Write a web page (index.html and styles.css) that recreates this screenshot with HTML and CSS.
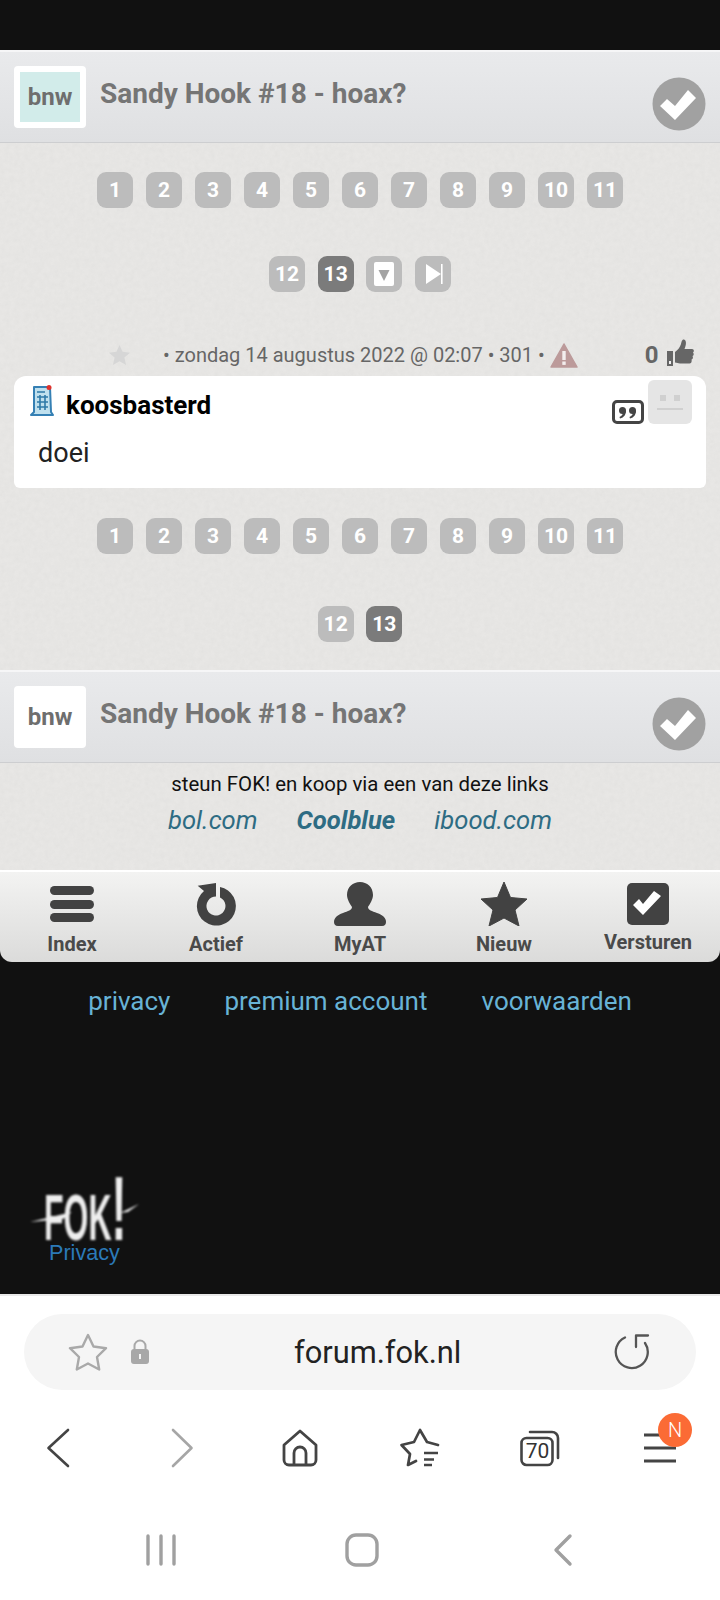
FILE: index.html
```html
<!DOCTYPE html>
<html lang="nl">
<head>
<meta charset="utf-8">
<title>Sandy Hook #18 - hoax?</title>
<link rel="stylesheet" href="styles.css">
</head>
<body>
<div class="page">
  <div class="status"></div>

  <header class="thread-head">
    <div class="forum-tag forum-tag-framed"><span>bnw</span></div>
    <h1 class="thread-title">Sandy Hook #18 - hoax?</h1>
    <svg class="check-badge" viewBox="0 0 54 54"><circle cx="27" cy="27" r="26.5" fill="#a1a1a1"/><path d="M8 29l7-7 8 7 13-16 8 8-21 22z" fill="#fff"/></svg>
  </header>

  <section class="textured">
    <nav class="pager">
      <div class="pg-row">
        <a class="pg">1</a><a class="pg">2</a><a class="pg">3</a><a class="pg">4</a><a class="pg">5</a><a class="pg">6</a><a class="pg">7</a><a class="pg">8</a><a class="pg">9</a><a class="pg">10</a><a class="pg">11</a>
      </div>
      <div class="pg-row pg-row-short">
        <a class="pg">12</a><a class="pg pg-on">13</a>
        <a class="pg"><svg class="pg-icon" viewBox="0 0 36 36"><rect x="8" y="6" width="20" height="24" rx="2" fill="#fff"/><path d="M12.5 14h11L18 25z" fill="#a3a3a3"/></svg></a>
        <a class="pg"><svg class="pg-icon" viewBox="0 0 36 36"><path d="M11 8l15 10-15 10z" fill="#fff"/><rect x="26" y="8" width="1.6" height="20" fill="#fff"/></svg></a>
      </div>
    </nav>

    <div class="post-meta">
      <svg class="meta-star" viewBox="0 0 24 24"><path d="M12 1l3.2 7.200 7.800.8-5.900 5.200 1.800 7.800-6.900-4-6.900 4 1.800-7.800L1 9l7.800-.8z" fill="#d6d6d6"/></svg>
      <span class="meta-text">• zondag 14 augustus 2022 @ 02:07 • 301 •</span>
      <svg class="meta-warn" viewBox="0 0 28 25"><path d="M14 1L27 24H1z" fill="#bc9a9a" stroke="#bc9a9a" stroke-width="1.500" stroke-linejoin="round"/><rect x="12.300" y="8" width="3.400" height="9" fill="#f3eeee"/><rect x="12.300" y="18.500" width="3.400" height="3.400" fill="#f3eeee"/></svg>
      <span class="meta-count">0</span>
      <svg class="meta-thumb" viewBox="0 0 27 27"><rect x="0" y="12" width="6" height="15" fill="#666"/><rect x="2" y="22" width="2" height="3" fill="#eee"/><path d="M8 13c3-2 5-5 6-8 .5-2 1-5 3-4.500 3 1 2 6 .5 9.500H25c2 0 2.500 2.500 1 3.500 1 1 1 3-.5 3.500.8 1.200.5 3-1 3.500.5 1.500 0 4-2 4H13c-2 0-3-1-5-1z" fill="#666"/></svg>
    </div>

    <article class="post">
      <div class="post-head">
        <svg class="post-icon" viewBox="0 0 24 31"><path d="M4 2h16l1 25 2 3H1l3-3z" fill="#bfe0ee" stroke="#3580b4" stroke-width="2" stroke-linejoin="round"/><path d="M7 7h8M7 12h11M7 17h11M7 22h11M10 10v15M15 10v15" stroke="#2f7aa8" stroke-width="1.600"/><circle cx="19" cy="2.500" r="2.500" fill="#e0322c"/></svg>
        <span class="username">koosbasterd</span>
        <svg class="quote" viewBox="0 0 32 24"><rect x="1.500" y="1.500" width="29" height="21" rx="3.500" fill="#fff" stroke="#444" stroke-width="3"/><circle cx="10.500" cy="10.500" r="3.500" fill="#444"/><circle cx="20.500" cy="10.500" r="3.500" fill="#444"/><path d="M14 10.500c0 4-2 7-6 8l-.5-1.500c2.500-1 3.500-3 3.500-5zM24 10.500c0 4-2 7-6 8l-.5-1.500c2.500-1 3.500-3 3.500-5z" fill="#444"/></svg>
        <div class="avatar"><i class="eye"></i><i class="eye"></i><i class="mouth"></i></div>
      </div>
      <p class="post-body">doei</p>
    </article>

    <nav class="pager pager-bottom">
      <div class="pg-row">
        <a class="pg">1</a><a class="pg">2</a><a class="pg">3</a><a class="pg">4</a><a class="pg">5</a><a class="pg">6</a><a class="pg">7</a><a class="pg">8</a><a class="pg">9</a><a class="pg">10</a><a class="pg">11</a>
      </div>
      <div class="pg-row pg-row-short">
        <a class="pg">12</a><a class="pg pg-on">13</a>
      </div>
    </nav>
  </section>

  <header class="thread-head">
    <div class="forum-tag"><span>bnw</span></div>
    <h2 class="thread-title">Sandy Hook #18 - hoax?</h2>
    <svg class="check-badge" viewBox="0 0 54 54"><circle cx="27" cy="27" r="26.500" fill="#a1a1a1"/><path d="M8 29l7-7 8 7 13-16 8 8-21 22z" fill="#fff"/></svg>
  </header>

  <section class="textured support">
    <p class="support-text">steun FOK! en koop via een van deze links</p>
    <div class="shops"><a>bol.com</a><a class="shop-strong">Coolblue</a><a>ibood.com</a></div>
  </section>

  <nav class="tabbar">
    <a class="tab">
      <svg class="tab-icon" viewBox="0 0 44 44"><rect y="4" width="44" height="9" rx="4.500" fill="#424242"/><rect y="18" width="44" height="9" rx="4.500" fill="#424242"/><rect y="31" width="44" height="9" rx="4.500" fill="#424242"/></svg>
      <span>Index</span>
    </a>
    <a class="tab">
      <svg class="tab-icon" viewBox="0 0 44 44"><path d="M26 4.900A19.500 19.500 0 1 1 10 9L3.700 3.700 22 1V14.500A9.500 9.500 0 1 0 26 15.400z" fill="#424242"/></svg>
      <span>Actief</span>
    </a>
    <a class="tab">
      <svg class="tab-icon tab-icon-wide" viewBox="0 0 52 44"><path d="M26 0c7 0 13 5 13 13 0 4-3 9-5 12 0 3 4 4 9 6 6 2 9 5 9 9 0 2-1 4-4 4H4c-3 0-4-2-4-4 0-4 3-7 9-9 5-2 9-3 9-6-2-3-5-8-5-12C13 5 19 0 26 0z" fill="#424242"/></svg>
      <span>MyAT</span>
    </a>
    <a class="tab">
      <svg class="tab-icon tab-icon-wide" viewBox="0 0 48 44"><path d="M24 0l6.500 15.500L47 17 35 28l4 16-15-8-15 8 4-16L1 17l16.500-1.500z" fill="#424242" stroke="#424242" stroke-linejoin="round"/></svg>
      <span>Nieuw</span>
    </a>
    <a class="tab tab-raised">
      <svg class="tab-icon" viewBox="0 0 44 44"><rect x="1" y="1" width="42" height="42" rx="5" fill="#424242"/><path d="M7 23l6-6 4 5 11-13 7 5-18 19z" fill="#fff"/></svg>
      <span>Versturen</span>
    </a>
  </nav>

  <footer class="site-foot">
    <div class="foot-links"><a>privacy</a><a>premium account</a><a>voorwaarden</a></div>
    <div class="fok-logo">
      <svg class="fok-art" viewBox="0 0 112 70">
        <defs><filter id="soft" x="-10%" y="-10%" width="120%" height="120%"><feGaussianBlur stdDeviation="0.800"/></filter></defs>
        <g filter="url(#soft)" fill="#eee">
          <text class="fok-word" transform="translate(14 65) scale(.5 1)">FOK<tspan class="fok-bang">!</tspan></text>
          <path d="M0 47L42 37 33 44zM90 38L109 29 98 37z"/>
        </g>
      </svg>
      <span class="fok-caption">Privacy</span>
    </div>
  </footer>

  <section class="browser">
    <div class="urlbar">
      <svg class="url-star" viewBox="0 0 40 38"><path d="M20 2l5.500 11.500 12.500 1.700-9 8.800 2.200 12.500L20 30.500 8.800 36.500 11 24 2 15.200l12.500-1.700z" fill="none" stroke="#a9a9a9" stroke-width="2.400" stroke-linejoin="round"/></svg>
      <svg class="url-lock" viewBox="0 0 20 26"><path d="M4.500 11V7a5.500 5.500 0 0 1 11 0v4" fill="none" stroke="#a8a8a8" stroke-width="2"/><rect x="1" y="10" width="18" height="15" rx="3" fill="#a8a8a8"/><rect x="9" y="15" width="2" height="5" fill="#f5f5f5"/></svg>
      <span class="url-text">forum.fok.nl</span>
      <svg class="url-reload" viewBox="0 0 36 36"><path d="M11 3.500A16 16 0 1 0 31 9M22 13V1.500H34" fill="none" stroke="#555" stroke-width="2.300" stroke-linecap="round" stroke-linejoin="round"/></svg>
    </div>

    <div class="toolbar">
      <svg class="tool" viewBox="0 0 40 40"><path d="M28 2L8.500 20 28 38" fill="none" stroke="#444" stroke-width="2.600" stroke-linecap="round" stroke-linejoin="round"/></svg>
      <svg class="tool" viewBox="0 0 40 40"><path d="M13 2l18.500 18L13 38" fill="none" stroke="#a6a6a6" stroke-width="2.600" stroke-linecap="round" stroke-linejoin="round"/></svg>
      <svg class="tool" viewBox="0 0 40 40"><path d="M4 17L20 3l16 14v15a5 5 0 0 1-5 5H9a5 5 0 0 1-5-5zM14 37V25a6 6 0 0 1 12 0v12" fill="none" stroke="#444" stroke-width="2.800" stroke-linejoin="round"/></svg>
      <svg class="tool" viewBox="0 0 40 40"><path d="M38 17L27 14 20 2 14 14 1.500 17 10 26 8 37 16 33" fill="none" stroke="#444" stroke-width="2.700" stroke-linecap="round" stroke-linejoin="round"/><path d="M24 25h14M24 31.500h10M24 37h8" stroke="#444" stroke-width="2.600"/></svg>
      <div class="tool tabs-icon">
        <svg class="tool" viewBox="0 0 40 40"><path d="M10 4h22a6 6 0 0 1 6 6v20" fill="none" stroke="#444" stroke-width="2.600" stroke-linecap="round"/><rect x="1.500" y="10" width="31" height="27" rx="5" fill="#fff" stroke="#444" stroke-width="2.600"/></svg>
        <span class="tabs-count">70</span>
      </div>
      <div class="tool menu-icon">
        <svg class="tool" viewBox="0 0 40 40"><path d="M4 7h32M4 20h32M4 33h32" stroke="#444" stroke-width="2.800"/></svg>
        <span class="menu-badge">N</span>
      </div>
    </div>

    <div class="sysnav">
      <svg class="sys" viewBox="0 0 40 40"><path d="M7 6v28M20 6v28M33 6v28" stroke="#a0a0a0" stroke-width="3.400" stroke-linecap="round"/></svg>
      <svg class="sys" viewBox="0 0 40 40"><rect x="5" y="5" width="30" height="30" rx="9" fill="none" stroke="#a0a0a0" stroke-width="3.400"/></svg>
      <svg class="sys" viewBox="0 0 40 40"><path d="M27 6L13 20l14 14" fill="none" stroke="#a0a0a0" stroke-width="3.400" stroke-linecap="round" stroke-linejoin="round"/></svg>
    </div>
  </section>
</div>
</body>
</html>
```

FILE: styles.css
```css
* { box-sizing: border-box; }
html, body { margin: 0; padding: 0; background: #111; }
body { font-family: Roboto, "Liberation Sans", sans-serif; }
.page { width: 720px; height: 1600px; overflow: hidden; display: flex; flex-direction: column; }
a { color: inherit; text-decoration: none; }

.status { height: 50px; background: #111; flex: none; }

.thread-head {
  flex: none; height: 93px; display: flex; align-items: flex-start;
  padding: 14px 14px 0;
  background: linear-gradient(#e9eaec, #dfe0e2);
  border-top: 2px solid #f6f6f7;
  border-bottom: 1px solid #cdced0;
}
.forum-tag {
  width: 72px; height: 62px; background: #fff; border-radius: 4px; flex: none;
  display: flex; align-items: center; justify-content: center;
  font-size: 24px; font-weight: 700; color: #6e6e6e;
}
.forum-tag-framed { padding: 6px; }
.forum-tag-framed span { width: 100%; height: 100%; background: #d2ecea; display: flex; align-items: center; justify-content: center; padding-bottom: 1px; }
.thread-title { margin: 10px 0 0 14px; font-size: 28px; line-height: 36px; font-weight: 700; color: #757575; flex: 1; }
.check-badge { width: 54px; height: 54px; margin-top: 11px; flex: none; }

.textured {
  flex: none;
  background-color: #e8e7e5;
  background-image: url("data:image/svg+xml,%3Csvg xmlns='http://www.w3.org/2000/svg' width='300' height='300'%3E%3Cfilter id='n'%3E%3CfeTurbulence type='fractalNoise' baseFrequency='.2' numOctaves='2' stitchTiles='stitch'/%3E%3CfeColorMatrix values='0 0 0 0 .55 0 0 0 0 .55 0 0 0 0 .55 0 0 0 .18 -.04'/%3E%3C/filter%3E%3Crect width='300' height='300' filter='url(%23n)'/%3E%3C/svg%3E");
}

.pager { display: flex; flex-direction: column; gap: 48px; padding-top: 29px; }
.pager-bottom { gap: 52px; padding-top: 30px; padding-bottom: 28px; }
.pg-row { display: flex; justify-content: center; gap: 13px; }
.pg-row-short { gap: 12.7px; }
.pg {
  width: 36px; height: 36px; border-radius: 9px; background: #bcbcbc; color: #fff;
  display: flex; align-items: center; justify-content: center;
  font-size: 21px; font-weight: 700;
}
.pg-on { background: #7b7b7b; }
.pg-icon { width: 36px; height: 36px; }

.post-meta { display: flex; align-items: center; height: 30px; margin-top: 48px; padding-left: 108px; color: #666; }
.meta-star { width: 23px; height: 23px; flex: none; }
.meta-text { font-size: 20px; margin-left: 32px; white-space: nowrap; }
.meta-warn { width: 28px; height: 25px; margin-left: 5px; flex: none; }
.meta-count { font-size: 24px; font-weight: 700; margin-left: 67px; }
.meta-thumb { width: 27px; height: 27px; margin-left: 8px; margin-top: -6px; flex: none; }

.post {
  margin: 6px 14px 0; height: 112px; background: #fff;
  border-radius: 12px 12px 6px 6px; padding: 4px 14px 0 16px;
}
.post-head { display: flex; align-items: flex-start; }
.post-icon { width: 24px; height: 31px; margin-top: 5px; flex: none; }
.username { font-size: 26px; font-weight: 700; color: #000; margin: 10px 0 0 12px; line-height: 30px; flex: 1; }
.quote { width: 32px; height: 24px; margin-top: 20px; flex: none; }
.avatar {
  position: relative; width: 44px; height: 44px; margin-left: 4px; border-radius: 6px; background: #e5e5e5; flex: none;
  display: flex; justify-content: center; gap: 8px; padding-top: 15px;
}
.eye { width: 6px; height: 6px; background: #d0d0d0; }
.mouth { position: absolute; left: 9px; right: 9px; top: 28px; height: 2px; background: #d0d0d0; }
.post-body { margin: 14px 0 0 8px; font-size: 27px; line-height: 30px; color: #222; }

.support { height: 107px; padding-top: 9px; text-align: center; }
.support-text { margin: 0; font-size: 20.4px; line-height: 24px; color: #111; }
.shops { display: flex; justify-content: center; gap: 39px; margin-top: 9px; font-size: 25.6px; line-height: 30px; font-style: italic; color: #2e6c83; }
.shop-strong { font-weight: 700; }

.tabbar {
  flex: none; height: 92px; display: grid; grid-template-columns: repeat(5, 144px);
  background: linear-gradient(#f3f3f2, #dbdbda);
  border-top: 2px solid #fff;
  border-radius: 0 0 12px 12px;
  position: relative;
}
.tab { display: flex; flex-direction: column; align-items: center; padding-top: 10px; color: #4a4a4a; font-size: 20px; font-weight: 700; }
.tab span { line-height: 24px; margin-top: 6px; }
.tab-icon { width: 44px; height: 44px; flex: none; }
.tab-icon-wide { width: 52px; }
.tab-raised span { margin-top: 4px; }

.site-foot { flex: none; height: 332px; background: #111; position: relative; }
.foot-links { display: flex; justify-content: center; gap: 54px; padding-top: 24px; font-size: 26px; line-height: 30px; color: #68b3d6; }
.fok-logo { position: absolute; left: 30px; top: 213px; width: 112px; }
.fok-art { display: block; width: 112px; height: 70px; overflow: visible; }
.fok-word { font-family: "Liberation Sans", sans-serif; font-weight: 700; font-size: 64px; }
.fok-bang { font-size: 90px; }
.fok-caption { position: absolute; left: 19px; top: 66px; font-family: "Liberation Sans", sans-serif; font-size: 21.6px; line-height: 24px; color: #2b7ab8; }

.browser { flex: 1; background: #fff; border-top: 2px solid #e9e9e9; position: relative; }
.urlbar {
  margin: 18px 24px 0; height: 76px; border-radius: 38px; background: #f5f5f5;
  display: flex; align-items: center; padding: 0 46px 0 44px; position: relative;
}
.url-star { width: 40px; height: 38px; flex: none; }
.url-lock { width: 20px; height: 26px; margin-left: 22px; flex: none; }
.url-text { position: absolute; left: 270px; top: 21px; font-size: 30.8px; color: #222; line-height: 36px; }
.url-reload { width: 36px; height: 36px; margin-left: auto; flex: none; }

.toolbar { display: grid; grid-template-columns: repeat(6, 120px); justify-items: center; margin-top: 38px; height: 40px; }
.tool { width: 40px; height: 40px; display: block; position: relative; }
.tabs-count { position: absolute; left: 3px; top: 11px; width: 29px; text-align: center; font-size: 21px; line-height: 25px; color: #333; }
.menu-badge {
  position: absolute; left: 18px; top: -15px; width: 34px; height: 34px; border-radius: 50%;
  background: #fb6b35; color: #fff; display: flex; align-items: center; justify-content: center; font-size: 20px; font-weight: 300;
}
.sysnav { display: grid; grid-template-columns: repeat(3, 201px); justify-items: center; padding-left: 60px; margin-top: 62px; }
.sys { width: 40px; height: 40px; display: block; }
```
